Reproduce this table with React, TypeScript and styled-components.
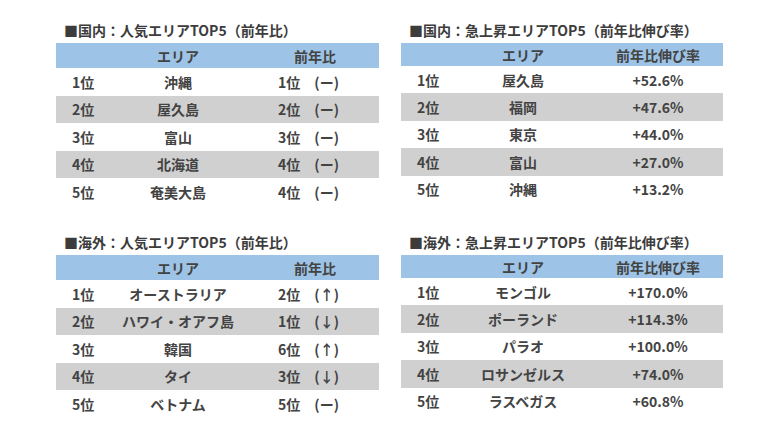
import React from "react";
import styled, { createGlobalStyle } from "styled-components";

const Global = createGlobalStyle`
  html, body { margin: 0; padding: 0; background: #ffffff; }
  body { font-family: "Noto Sans CJK JP", "Noto Sans", sans-serif; color: #404040; }
`;

const Page = styled.div`
  width: 780px;
  height: 438px;
  box-sizing: border-box;
  padding: 20px 0 0 56px;
  display: grid;
  grid-template-columns: 323px 322px;
  column-gap: 22px;
  row-gap: 26.5px;
  align-items: start;
  align-content: start;
`;

const Section = styled.section`
  display: flex;
  flex-direction: column;
`;

const Title = styled.div`
  font-size: 14px;
  font-weight: 700;
  line-height: 20px;
  height: 20px;
  padding-left: 8px;
  margin-bottom: 3px;
  color: #3c3c3c;
  white-space: nowrap;
`;

const Table = styled.div<{ $cols: string }>`
  display: grid;
  grid-template-columns: ${(p) => p.$cols};
`;

const Header = styled.div<{ $h: number }>`
  display: contents;
  & > div {
    height: ${(p) => p.$h}px;
    background: #9dc3e6;
  }
`;

const Row = styled.div<{ $shade: boolean; $h: number }>`
  display: contents;
  & > div {
    height: ${(p) => p.$h}px;
    background: ${(p) => (p.$shade ? "#d0d0d0" : "#ffffff")};
  }
`;

const Cell = styled.div<{ $align?: "left" | "center"; $pl?: number }>`
  display: flex;
  align-items: center;
  justify-content: ${(p) => (p.$align === "left" ? "flex-start" : "center")};
  padding-left: ${(p) => p.$pl ?? 0}px;
  box-sizing: border-box;
  font-size: 14px;
  font-weight: 700;
  color: #434343;
  white-space: pre;
  line-height: 1;
`;

type Data = {
  title: string;
  valueHead: string;
  rows: [string, string][];
};

const tables: (Data & { right: boolean })[] = [
  {
    right: false,
    title: "■国内：人気エリアTOP5（前年比）",
    valueHead: "前年比",
    rows: [
      ["沖縄", "1位　(ー)"],
      ["屋久島", "2位　(ー)"],
      ["富山", "3位　(ー)"],
      ["北海道", "4位　(ー)"],
      ["奄美大島", "4位　(ー)"],
    ],
  },
  {
    right: true,
    title: "■国内：急上昇エリアTOP5（前年比伸び率）",
    valueHead: "前年比伸び率",
    rows: [
      ["屋久島", "+52.6%"],
      ["福岡", "+47.6%"],
      ["東京", "+44.0%"],
      ["富山", "+27.0%"],
      ["沖縄", "+13.2%"],
    ],
  },
  {
    right: false,
    title: "■海外：人気エリアTOP5（前年比）",
    valueHead: "前年比",
    rows: [
      ["オーストラリア", "2位　(↑)"],
      ["ハワイ・オアフ島", "1位　(↓)"],
      ["韓国", "6位　(↑)"],
      ["タイ", "3位　(↓)"],
      ["ベトナム", "5位　(ー)"],
    ],
  },
  {
    right: true,
    title: "■海外：急上昇エリアTOP5（前年比伸び率）",
    valueHead: "前年比伸び率",
    rows: [
      ["モンゴル", "+170.0%"],
      ["ポーランド", "+114.3%"],
      ["パラオ", "+100.0%"],
      ["ロサンゼルス", "+74.0%"],
      ["ラスベガス", "+60.8%"],
    ],
  },
];

function RankTable({ title, valueHead, rows, right }: Data & { right: boolean }) {
  const cols = right ? "62px 120px 140px" : "62px 120px 141px";
  const headH = right ? 23 : 25;
  const rowH = right ? 27.4 : 27.5;
  const headPad = right ? 10 : 13;
  const valPad = right ? 10 : 0;
  return (
    <Section>
      <Title>{title}</Title>
      <Table $cols={cols}>
        <Header $h={headH}>
          <Cell />
          <Cell>エリア</Cell>
          <Cell $pl={headPad}>{valueHead}</Cell>
        </Header>
        {rows.map(([area, val], i) => (
          <Row key={i} $shade={i % 2 === 1} $h={rowH}>
            <Cell $align="left" $pl={16}>{`${i + 1}位`}</Cell>
            <Cell>{area}</Cell>
            <Cell $pl={valPad}>{val}</Cell>
          </Row>
        ))}
      </Table>
    </Section>
  );
}

export default function App() {
  return (
    <>
      <Global />
      <Page>
        {tables.map((t, i) => (
          <RankTable key={i} {...t} />
        ))}
      </Page>
    </>
  );
}
